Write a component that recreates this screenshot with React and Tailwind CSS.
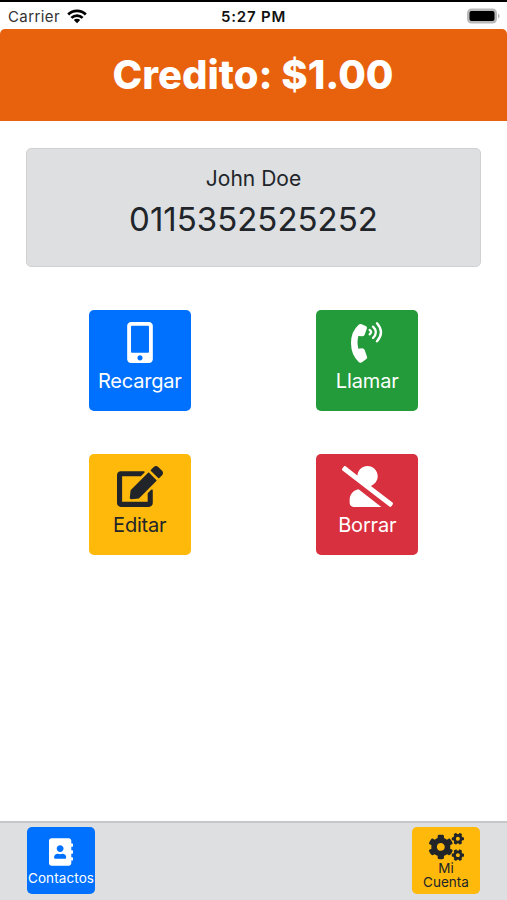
import React from 'react';
import { FaMobileAlt, FaEdit, FaUserSlash, FaAddressBook, FaCogs } from 'react-icons/fa';

// handset with three sound waves
const PhoneVolume = ({ className }) => (
  <svg viewBox="0 0 96 123" className={className} fill="currentColor">
    <path d="M23 8 Q27 5 32 7 L44 12 Q50 15 47 21 L41 38 Q39 43 33 43 L22 42 Q17 61 22 80 L33 79 Q39 79 41 84 L48 104 Q50 109 45 112 L34 120 Q28 124 23 120 Q0 98 0 63 Q0 28 23 8z" />
    <path d="M56 24q9 6 0 13" fill="none" stroke="currentColor" strokeWidth="7" strokeLinecap="round" />
    <path d="M66 14q17 16 0 34" fill="none" stroke="currentColor" strokeWidth="7" strokeLinecap="round" />
    <path d="M78 4q24 27 0 54" fill="none" stroke="currentColor" strokeWidth="7" strokeLinecap="round" />
  </svg>
);

const actions = [
  { label: 'Recargar', icon: FaMobileAlt, color: 'bg-[#0070fe] text-white', size: 'w-[26px] h-[41px]', text: 'tracking-[-0.2px]' },
  { label: 'Llamar', icon: PhoneVolume, color: 'bg-[#239b3a] text-white', size: 'w-8 h-[41px]', text: 'tracking-[-0.1px]' },
  { label: 'Editar', icon: FaEdit, color: 'bg-[#ffb90b] text-[#212529]', size: 'w-[46px] h-[41px]', text: 'tracking-[-0.2px]' },
  { label: 'Borrar', icon: FaUserSlash, color: 'bg-[#d8303f] text-white', size: 'w-[51px] h-[41px]', text: 'tracking-[-0.2px]' }
];

const StatusBar = () => (
  <div className="h-[29px] border-t-2 border-black grid grid-cols-3 items-center text-[15px] leading-none">
    <div className="flex items-center gap-[7px] pl-[8px] pt-px text-[#333]">
      <span className="tracking-[0.4px]">Carrier</span>
      <svg viewBox="0 0 20 15" className="w-5 h-[15px]" fill="none" stroke="#000" strokeWidth="2.7">
        <path d="M1.2 5.5a12.5 12.5 0 0 1 17.6 0" />
        <path d="M4.4 8.9a8 8 0 0 1 11.2 0" />
        <path d="M10 14.2 6.8 11a4.6 4.6 0 0 1 6.4 0z" fill="#000" stroke="none" />
      </svg>
    </div>
    <div className="pt-px text-center font-semibold tracking-[0.8px] text-[#111]">5:27 PM</div>
    <div className="flex justify-end pr-[7px]">
      <svg viewBox="0 0 34 16" className="w-[34px] h-4">
        <rect x="1" y="0.5" width="30" height="15" rx="4.5" fill="#b9b9b9" />
        <path d="M32 5.5c2 .8 2 4.2 0 5z" fill="#b9b9b9" />
        <rect x="3.5" y="3" width="25" height="10" rx="2" fill="#000" />
      </svg>
    </div>
  </div>
);

const ActionButton = ({ action }) => {
  const Icon = action.icon;

  return (
    <button className={`w-[102px] h-[101px] rounded-[5px] flex flex-col items-center pt-3 ${action.color}`}>
      <Icon className={action.size} />
      <span className={`mt-[5px] text-[20px] leading-[26px] ${action.text}`}>{action.label}</span>
    </button>
  );
};

const App = () => {
  return (
    <div className="h-screen flex flex-col bg-white text-[#212529] font-['Inter','Liberation_Sans',sans-serif] overflow-hidden">
      <StatusBar />

      <header className="h-[92px] bg-[#e8610d] rounded-t-[5px] flex justify-center pt-[22px]">
        <h1 className="text-white text-[40px] leading-[48px] font-extrabold mr-px">Credito: $1.00</h1>
      </header>

      <main className="flex-1 px-[26px] pt-[27px]">
        <div className="h-[119px] rounded-[5px] border border-[#cfd1d3] bg-[#dddfe1] text-center pt-4">
          <p className="text-[21px] leading-[28px]">John Doe</p>
          <p className="mt-[6px] text-[33px] leading-[40px]">0115352525252</p>
        </div>

        <div className="grid grid-cols-2 justify-items-center gap-y-[43px] mt-[43px]">
          {actions.map(action => (
            <ActionButton key={action.label} action={action} />
          ))}
        </div>
      </main>

      <footer className="h-[79px] border-t-2 border-[#c4c7c9] bg-[#dddfe1] flex justify-between px-[27px] pt-1">
        <button className="w-[68px] h-[67px] rounded-[5px] bg-[#0070fe] text-white flex flex-col items-center pt-[11px]">
          <FaAddressBook className="w-6 h-7" />
          <span className="mt-1 text-[13.5px] leading-[16px] tracking-[0.1px]">Contactos</span>
        </button>
        <button className="w-[68px] h-[67px] rounded-[5px] bg-[#ffb90b] flex flex-col items-center pt-[6px]">
          <FaCogs className="w-[35px] h-7" />
          <span className="flex flex-col text-[13.5px] leading-[14px]">
            <span>Mi</span>
            <span>Cuenta</span>
          </span>
        </button>
      </footer>
    </div>
  );
};

export default App;
